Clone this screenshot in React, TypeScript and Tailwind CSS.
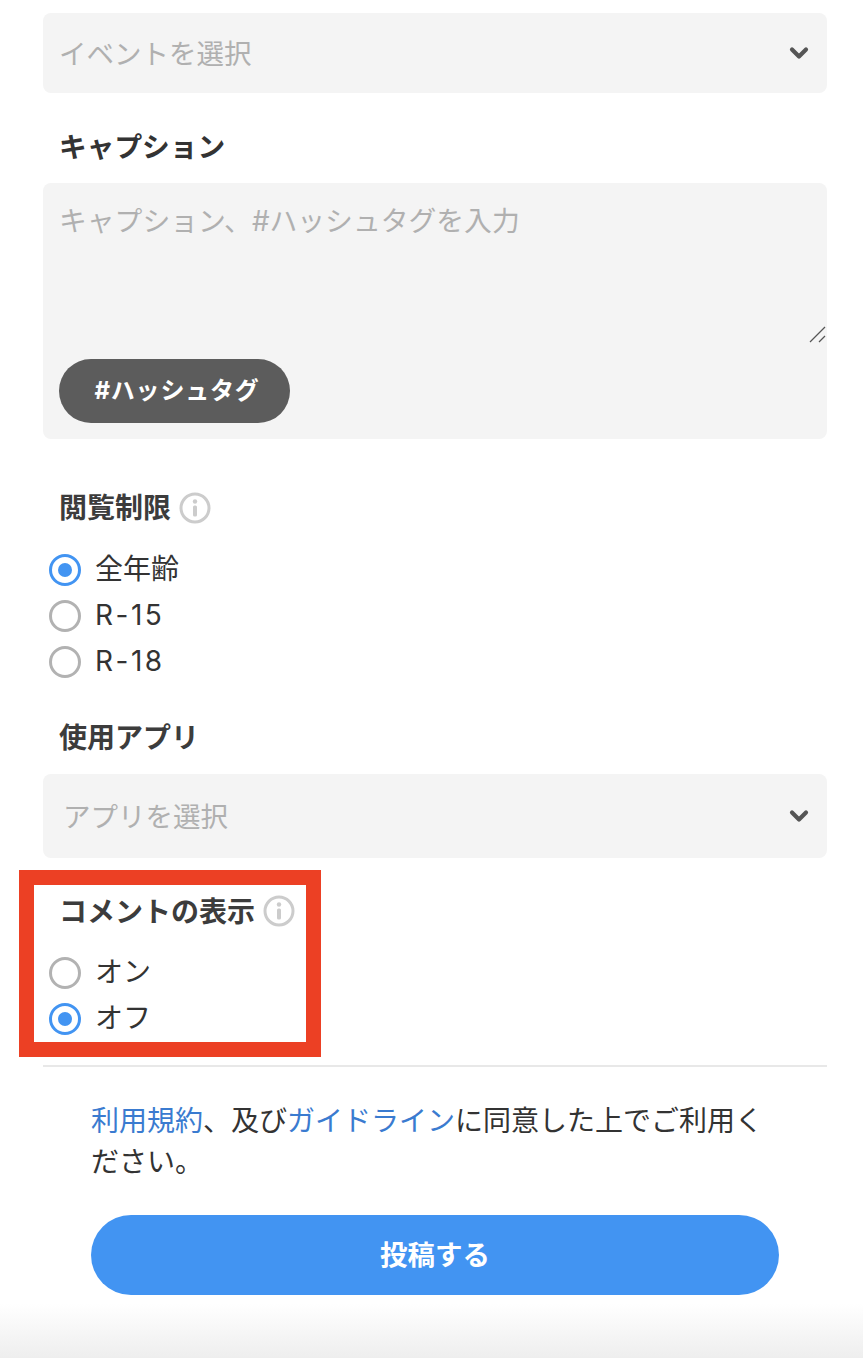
import { ChevronDown } from 'lucide-react';

const jp = { fontFamily: 'Inter, "Noto Sans CJK JP", "Noto Sans", sans-serif' };

const InfoIcon = () => (
  <svg width="32" height="32" viewBox="0 0 32 32" className="shrink-0">
    <circle cx="16" cy="16" r="14" fill="none" stroke="#cccccc" strokeWidth="3" />
    <circle cx="16" cy="9.5" r="2.2" fill="#cccccc" />
    <rect x="14" y="13.5" width="4" height="11" rx="1.5" fill="#cccccc" />
  </svg>
);

const Radio = ({ label, checked, wide }: { label: string; checked?: boolean; wide?: boolean }) => (
  <div className="flex items-center h-[46px] pl-[6px]">
    <span
      className={`w-[32px] h-[32px] rounded-full border-[3px] flex items-center justify-center ${
        checked ? 'border-[#4294f2]' : 'border-[#b2b2b2]'
      }`}
    >
      {checked && <span className="w-[14px] h-[14px] rounded-full bg-[#4294f2]" />}
    </span>
    <span className={`ml-[14px] pb-[2px] text-[28px] text-[#333333] leading-none ${wide ? 'tracking-[2.5px]' : 'tracking-normal'}`}>
      {label}
    </span>
  </div>
);

const SelectBox = ({ placeholder, h, pl }: { placeholder: string; h: string; pl: string }) => (
  <div className={`${h} ${pl} rounded-lg bg-[#f4f4f4] flex items-center justify-between pr-[14px]`}>
    <span className="pt-[3px] text-[27.5px] text-[#b0b0b0] leading-none">{placeholder}</span>
    <ChevronDown className="w-[28px] h-[28px] text-[#555555]" strokeWidth={3.6} />
  </div>
);

export default function App() {
  return (
    <div className="relative w-[863px] h-[1358px] overflow-hidden bg-white" style={jp}>
      <div className="pl-[43px] pr-[36px] pt-[13px]">
        <SelectBox placeholder="イベントを選択" h="h-[80px]" pl="pl-[16px]" />

        <div className="pl-[16px] pt-[3px] mt-[32px] h-[42px] flex items-center text-[27.7px] font-bold text-[#333333]">
          キャプション
        </div>

        <div className="mt-[16px] h-[256px] rounded-lg bg-[#f4f4f4] relative flex flex-col justify-between pl-[16px] pt-[17px] pb-[16px]">
          <div className="text-[27.8px] text-[#b0b0b0] leading-[42px]">キャプション、#ハッシュタグを入力</div>
          <button className="w-[231px] h-[64px] pl-[5px] rounded-full bg-[#5c5c5c] text-white text-[24px] font-bold tracking-[0.8px]">
            #ハッシュタグ
          </button>
          <svg width="18" height="18" viewBox="0 0 18 18" className="absolute right-[0px] top-[143px]">
            <path d="M1 16 L16 1" stroke="#555555" strokeWidth="1.3" />
            <path d="M10 16 L16 10" stroke="#555555" strokeWidth="1.3" />
          </svg>
        </div>

        <div className="pl-[16px] mt-[48px] h-[42px] flex items-center gap-[8px] text-[28px] font-bold text-[#3c3c3c]">
          閲覧制限
          <InfoIcon />
        </div>
        <div className="mt-[18px]">
          <Radio label="全年齢" checked />
          <Radio label="R-15" wide />
          <Radio label="R-18" wide />
        </div>

        <div className="pl-[16px] pt-[2px] mt-[31px] h-[42px] flex items-center text-[28px] font-bold text-[#3c3c3c]">
          使用アプリ
        </div>
        <div className="mt-[16px]">
          <SelectBox placeholder="アプリを選択" h="h-[84px]" pl="pl-[20px]" />
        </div>

        <div className="pl-[16px] mt-[32px] h-[42px] flex items-center gap-[8px] text-[28px] font-bold text-[#3c3c3c]">
          <span className="pt-[2px]">コメントの表示</span>
          <InfoIcon />
        </div>
        <div className="mt-[18px]">
          <Radio label="オン" />
          <Radio label="オフ" checked />
        </div>

        <div className="mt-[23px] border-t-2 border-[#e8e8e8]" />

        <div className="px-[48px] pt-[34px]">
          <p className="text-[28px] leading-[41px] text-[#333333]">
            <span className="text-[#3a7bd0]">利用規約</span>、及び<span className="text-[#3a7bd0]">ガイドライン</span>
            に同意した上でご利用ください。
          </p>
          <button className="mt-[32px] w-[688px] h-[80px] pt-[2px] rounded-full bg-[#4294f2] text-white text-[27.5px] font-bold">
            投稿する
          </button>
        </div>
      </div>

      {/* 赤枠 */}
      <div className="absolute left-[19px] top-[870px] w-[302px] h-[187px] border-[15px] border-[#ec4024] pointer-events-none" />

      {/* 下のグラデーション */}
      <div className="absolute left-0 right-0 bottom-0 h-[54px] bg-gradient-to-b from-white to-[#eeeeee]" />
    </div>
  );
}
